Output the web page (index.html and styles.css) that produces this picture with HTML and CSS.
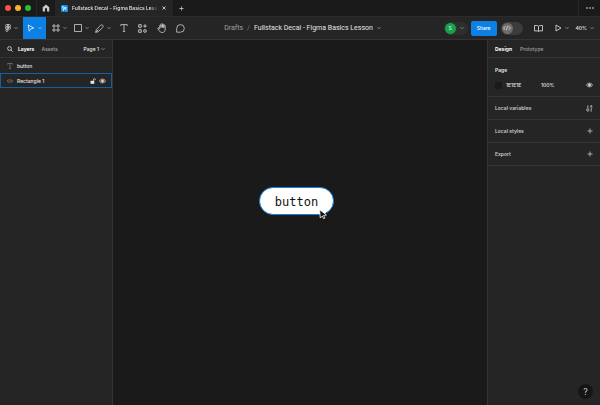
FILE: index.html
```html
<!DOCTYPE html>
<html lang="en">
<head>
  <meta charset="UTF-8" />
  <meta name="viewport" content="width=device-width, initial-scale=1.0"/>
  <title>Fullstack Decal - Figma Basics Lesson</title>
  <link rel="stylesheet" href="styles.css">
</head>
<body>

  <svg width="0" height="0" class="sprite" aria-hidden="true">
    <symbol id="caret" viewBox="0 0 4 4"><path d="M.5 1.2 2 2.7 3.5 1.2"/></symbol>
    <symbol id="plus" viewBox="0 0 6 6"><path d="M3 .5v5M.5 3h5"/></symbol>
    <symbol id="eye" viewBox="0 0 8 6"><path d="M.5 3C2 .2 6 .2 7.500 3 6 5.800 2 5.800.5 3z"/><circle cx="4" cy="3" r="1.200" fill="currentColor"/></symbol>
  </svg>

  <nav class="tabbar">
    <div class="lights"><i class="red"></i><i class="yellow"></i><i class="green"></i></div>
    <button class="home" aria-label="Home">
      <svg width="8" height="8" viewBox="0 0 8 8"><path fill="currentColor" stroke="none" d="M4 .5 7.300 3.300V7.500H5V5a1 1 0 0 0-2 0v2.500H.700V3.300z"/></svg>
    </button>
    <div class="tab">
      <svg width="7" height="7" viewBox="0 0 7 7"><rect width="7" height="7" rx="1" fill="#0c8ce9" stroke="none"/><path stroke="#fff" d="M1.500 1.500 5.500 3 3 3.500 2.500 5.500zM4 4l1.500 1.500"/></svg>
      <span class="tab-name">Fullstack Decal - Figma Basics Lesson</span>
      <button aria-label="Close tab"><svg width="4" height="4" viewBox="0 0 4 4"><path d="M.5.5l3 3M3.500.5l-3 3"/></svg></button>
    </div>
    <button class="new-tab" aria-label="New tab"><svg width="5" height="5"><use href="#plus"/></svg></button>
    <button class="more" aria-label="More"><svg width="8" height="2" viewBox="0 0 8 2"><g fill="currentColor" stroke="none"><circle cx="1" cy="1" r=".8"/><circle cx="4" cy="1" r=".8"/><circle cx="7" cy="1" r=".8"/></g></svg></button>
  </nav>

  <header class="toolbar">
    <div class="tools">
      <button class="tool wide menu" aria-label="Menu">
        <svg width="6" height="8" viewBox="0 0 6 8"><path d="M3 .5H1.700a1.200 1.200 0 0 0 0 2.400H3zM3 .5h1.300a1.200 1.200 0 0 1 0 2.400H3zM3 2.900H1.700a1.200 1.200 0 0 0 0 2.400H3zM3 5.300H1.700A1.100 1.100 0 1 0 3 6.400z"/><circle cx="4.300" cy="4.100" r="1.200"/></svg>
        <svg class="caret" width="4" height="4"><use href="#caret"/></svg>
      </button>
      <button class="tool wide active" aria-label="Move">
        <svg width="8" height="8" viewBox="0 0 8 8"><path d="M1.200 1 6.800 4 4 4.800 2.200 7.200z"/></svg>
        <svg class="caret" width="4" height="4"><use href="#caret"/></svg>
      </button>
      <button class="tool wide" aria-label="Frame">
        <svg width="8" height="8" viewBox="0 0 8 8"><path d="M2 0v8M6 0v8M0 2h8M0 6h8"/></svg>
        <svg class="caret" width="4" height="4"><use href="#caret"/></svg>
      </button>
      <button class="tool wide" aria-label="Rectangle">
        <svg width="8" height="8" viewBox="0 0 8 8"><path d="M.5.5h7v7h-7z"/></svg>
        <svg class="caret" width="4" height="4"><use href="#caret"/></svg>
      </button>
      <button class="tool wide" aria-label="Pen">
        <svg width="9" height="9" viewBox="0 0 9 9"><path d="M.6 8.400 1.400 5.500 5.700 1.200Q6.600.3 7.700 1.300 8.700 2.400 7.800 3.300L3.500 7.600zM.8 8.200 3.600 5.400"/></svg>
        <svg class="caret" width="4" height="4"><use href="#caret"/></svg>
      </button>
      <button class="tool" aria-label="Text">
        <svg width="8" height="8" viewBox="0 0 8 8"><path d="M.8 2V.600h6.400V2M4 .600v6.800M2.800 7.400h2.400"/></svg>
      </button>
      <button class="tool" aria-label="Resources">
        <svg width="9" height="9" viewBox="0 0 8 8"><path d="M.6.6h2.300v2.300H.6zM.6 5.100h2.300v2.300H.6zM6.200.300v3M4.700 1.800h3"/><circle cx="6.200" cy="6.200" r="1.200"/></svg>
      </button>
      <button class="tool" aria-label="Hand">
        <svg width="10" height="10" viewBox="0 0 10 10"><path d="M2.700 6V2.500a.7.7 0 0 1 1.300 0V4.500 1.400a.7.7 0 0 1 1.400 0V4.500 1.700a.7.7 0 0 1 1.400 0V4.800 2.800a.7.7 0 0 1 1.400 0V6c0 2.400-1.200 3.500-3 3.500S3 8.800 2 7.200L.7 5.600C.6 4.600 1.600 4.500 2.700 6z"/></svg>
      </button>
      <button class="tool" aria-label="Comment">
        <svg width="9" height="9" viewBox="0 0 9 9"><path d="M.7 8.200V4.400A3.800 3.800 0 1 1 4.500 8.200z"/></svg>
      </button>
    </div>

    <div class="file">
      <a href="#">Drafts</a>
      <span class="slash">/</span>
      <span class="file-name">Fullstack Decal - Figma Basics Lesson</span>
      <svg class="caret" width="4" height="4"><use href="#caret"/></svg>
    </div>

    <div class="actions">
      <button class="user" aria-label="Account"><span class="avatar">S</span><svg class="caret" width="4" height="4"><use href="#caret"/></svg></button>
      <button class="share">Share</button>
      <button class="dev" aria-label="Dev mode"><span class="knob"><svg width="8" height="6" viewBox="0 0 8 6"><path d="M2.200 1.200.600 3l1.600 1.800M5.800 1.200 7.400 3 5.800 4.800M4.600.800 3.400 5.200"/></svg></span></button>
      <button class="book" aria-label="Libraries"><svg width="9" height="7" viewBox="0 0 9 7"><path d="M4.500 1.300Q3.800.5 2.800.5H.5v5.400H3q1 0 1.500.7Q5 5.900 6 5.900h2.500V.5H6.200Q5.200.5 4.500 1.300v5"/></svg></button>
      <button class="play" aria-label="Present"><svg width="7" height="8" viewBox="0 0 7 8"><path d="M1 1v6l5-3z"/></svg><svg class="caret" width="4" height="4"><use href="#caret"/></svg></button>
      <button class="zoom">40%<svg class="caret" width="4" height="4"><use href="#caret"/></svg></button>
    </div>
  </header>

  <main class="workspace">
    <aside class="layers-panel">
      <div class="panel-head">
        <button aria-label="Search"><svg width="6" height="6" viewBox="0 0 6 6"><circle cx="2.500" cy="2.500" r="1.900"/><path d="M4 4l1.700 1.700"/></svg></button>
        <button class="current">Layers</button>
        <button class="muted">Assets</button>
        <button class="page-select">Page 1<svg class="caret" width="4" height="4"><use href="#caret"/></svg></button>
      </div>
      <ul class="layers">
        <li>
          <svg class="type" width="6" height="6" viewBox="0 0 6 6"><path d="M.5 1.500V.5h5v1M3 .5v5M2 5.500h2"/></svg>
          <span>button</span>
        </li>
        <li class="selected">
          <svg class="type" width="6" height="6" viewBox="0 0 6 6"><rect x=".5" y="2" width="5" height="2" rx="1"/></svg>
          <span>Rectangle 1</span>
          <button class="lock" aria-label="Lock"><svg width="6" height="6" viewBox="0 0 6 6"><path fill="currentColor" stroke="none" d="M.5 2.800H4.300V5.800H.5z"/><path d="M3.400 2.800V1.700a1 1 0 0 1 2 0v.500"/></svg></button>
          <button aria-label="Hide"><svg width="7" height="6"><use href="#eye"/></svg></button>
        </li>
      </ul>
    </aside>

    <section class="canvas">
      <div class="shape">button</div>
      <svg class="cursor" width="8" height="10" viewBox="0 0 8 10"><path d="M.7.7 7.400 6 4.500 6.500 6 9 4.600 9.600 3.300 7.100 1.200 8.800z"/></svg>
    </section>

    <aside class="design-panel">
      <div class="panel-head">
        <button class="current">Design</button>
        <button class="muted">Prototype</button>
      </div>
      <div class="page-section">
        <h2>Page</h2>
        <div class="fill">
          <i class="swatch"></i>
          <input type="text" value="1E1E1E" aria-label="Page color">
          <input type="text" value="100%" aria-label="Opacity">
          <button aria-label="Show fill"><svg width="7" height="6"><use href="#eye"/></svg></button>
        </div>
      </div>
      <div class="row">
        <h2>Local variables</h2>
        <button aria-label="Variable settings"><svg width="7" height="7" viewBox="0 0 7 7"><path d="M1.800.3v3.200M5.200 3.500v3.200M3.900 1.800 5.200.5 6.500 1.800M5.200.5v3"/><circle cx="1.800" cy="5" r="1.200"/></svg></button>
      </div>
      <div class="row">
        <h2>Local styles</h2>
        <button aria-label="Add style"><svg width="6" height="6"><use href="#plus"/></svg></button>
      </div>
      <div class="row">
        <h2>Export</h2>
        <button aria-label="Add export"><svg width="6" height="6"><use href="#plus"/></svg></button>
      </div>
    </aside>
  </main>

  <button class="help" aria-label="Help">?</button>

</body>
</html>
```

FILE: styles.css
```css
:root {
  --panel: #252525;
  --canvas: #1a1a1a;
  --line: #343434;
  --blue: #0c80e4;
  --text: #e6e6e6;
  --muted: #a0a0a0;
}
* {
  box-sizing: border-box;
}
body {
  margin: 0;
  min-height: 100vh;
  display: flex;
  flex-direction: column;
  font-family: 'Inter', sans-serif;
  font-size: 5px;
  line-height: 8px;
  font-weight: 500;
  color: var(--text);
  background: var(--canvas);
}
button {
  display: flex;
  align-items: center;
  padding: 0;
  border: 0;
  background: none;
  font: inherit;
  color: inherit;
}
svg {
  display: block;
  flex: none;
  fill: none;
  stroke: currentColor;
  stroke-width: 0.8;
}
.sprite {
  position: absolute;
}
.caret {
  color: var(--muted);
}
h2 {
  margin: 0;
  font-size: inherit;
  font-weight: 600;
}

/* window tabs */
.tabbar {
  display: flex;
  height: 16px;
}
.lights {
  display: flex;
  align-items: center;
  gap: 4px;
  width: 36px;
  padding-left: 5px;
}
.lights i {
  width: 6px;
  height: 6px;
  border-radius: 50%;
}
.red { background: #fb4f48; }
.yellow { background: #fdb124; }
.green { background: #27c138; }
.home {
  justify-content: center;
  width: 19px;
  border-left: 1px solid #262626;
  color: #c8c8c8;
}
.tab {
  display: flex;
  align-items: center;
  gap: 4px;
  width: 118px;
  padding: 0 7px 0 6px;
  background: var(--panel);
}
.tab-name {
  flex: 1;
  overflow: hidden;
  white-space: nowrap;
  mask-image: linear-gradient(to right, #000 90%, transparent);
}
.new-tab {
  justify-content: center;
  width: 17px;
}
.more {
  justify-content: center;
  width: 22px;
  margin-left: auto;
  border-left: 1px solid #262626;
}

/* toolbar */
.toolbar {
  display: grid;
  grid-template-columns: 1fr auto 1fr;
  height: 24px;
  background: var(--panel);
  border-top: 1px solid #2c2c2c;
  border-bottom: 1px solid var(--line);
}
.tools,
.actions,
.file {
  display: flex;
  align-items: center;
}
.tool {
  justify-content: center;
  width: 19px;
  height: 22px;
  color: #d0d0d0;
}
.tool.wide {
  gap: 3px;
  width: 22px;
}
.tool.menu,
.tool.active {
  width: 23px;
}
.tool.active {
  margin-right: 2px;
  background: var(--blue);
  color: #fff;
}
.active .caret {
  color: #a9d2f7;
}
.file {
  gap: 4px;
  padding-left: 5px;
  font-family: 'Roboto', sans-serif;
  font-size: 7px;
  font-weight: 400;
}
.file a {
  color: var(--muted);
  text-decoration: none;
}
.slash {
  color: #777;
}
.actions {
  justify-content: flex-end;
  padding-right: 6px;
}
.user {
  gap: 3px;
  padding-right: 4px;
  border-radius: 7px;
  background: #2e2e2e;
}
.avatar {
  width: 13px;
  height: 13px;
  line-height: 11px;
  border: 1px solid #2e2e2e;
  border-radius: 50%;
  background: #16a24b;
}
.share {
  height: 15px;
  margin-left: 3px;
  padding: 0 6px;
  border-radius: 2px;
  background: var(--blue);
  color: #fff;
}
.dev {
  width: 22px;
  height: 13px;
  margin-left: 4px;
  padding: 1px;
  border-radius: 7px;
  background: #3c3c3c;
}
.knob {
  display: grid;
  place-items: center;
  width: 11px;
  height: 11px;
  border-radius: 50%;
  background: #6c6c6c;
}
.book {
  margin-left: 11px;
}
.play {
  gap: 3px;
  margin-left: 12px;
}
.zoom {
  gap: 3px;
  margin-left: 7px;
}

/* panels */
.workspace {
  flex: 1;
  display: flex;
}
.layers-panel {
  width: 113px;
  background: var(--panel);
  border-right: 1px solid var(--line);
}
.design-panel {
  width: 113px;
  background: var(--panel);
  border-left: 1px solid var(--line);
}
.panel-head {
  display: flex;
  align-items: center;
  gap: 8px;
  height: 18px;
  padding: 0 7px;
  border-bottom: 1px solid var(--line);
}
.layers-panel .panel-head {
  gap: 5px;
}
.layers-panel .muted {
  margin-left: 2px;
}
.current {
  font-weight: 700;
  color: #fff;
}
.muted {
  color: var(--muted);
}
.page-select {
  gap: 2px;
  margin-left: auto;
}
.layers {
  margin: 0;
  padding: 0;
  list-style: none;
}
.layers li {
  display: flex;
  align-items: center;
  height: 15px;
  padding: 0 5px 0 6px;
  border: 1px solid transparent;
}
.layers li.selected {
  border-color: #1560a0;
}
.type {
  margin-right: 4px;
  color: #777;
}
.lock {
  margin-left: auto;
  margin-right: 3px;
}
.page-section {
  padding: 8px 7px 7px;
  border-bottom: 1px solid var(--line);
}
.fill {
  display: flex;
  align-items: center;
  margin-top: 7px;
}
.swatch {
  width: 7px;
  height: 7px;
  margin-right: 4px;
  background: #1a1a1a;
}
.fill input {
  width: 35px;
  height: 8px;
  padding: 0;
  border: 0;
  background: none;
  font: inherit;
  color: inherit;
}
.fill button {
  margin-left: auto;
}
.row {
  display: flex;
  align-items: center;
  justify-content: space-between;
  height: 23px;
  padding: 0 7px;
  border-bottom: 1px solid var(--line);
  color: #c8c8c8;
}

/* canvas */
.canvas {
  position: relative;
  flex: 1;
}
.shape {
  position: absolute;
  left: 146px;
  top: 147px;
  width: 75px;
  height: 28px;
  border: 1px solid var(--blue);
  border-radius: 14px;
  background: #fff;
  color: #111;
  font: 12px/28px 'DejaVu Sans Mono', monospace;
  text-align: center;
}
.cursor {
  position: absolute;
  left: 206px;
  top: 169px;
  fill: #111;
  stroke: #fff;
}
.help {
  position: fixed;
  right: 7px;
  bottom: 6px;
  justify-content: center;
  width: 15px;
  height: 15px;
  border-radius: 50%;
  background: #151515;
  color: #bbb;
  font-size: 9px;
}
```
